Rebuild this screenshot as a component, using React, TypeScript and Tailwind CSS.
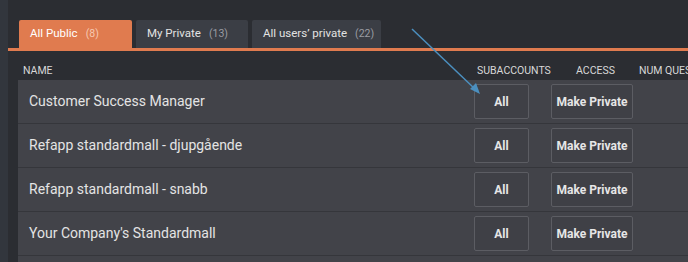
import React from 'react';

const rows = [
  'Customer Success Manager',
  'Refapp standardmall - djupgående',
  'Refapp standardmall - snabb',
  "Your Company's Standardmall",
];

const tabs = [
  { label: 'All Public', count: 8, active: true, w: 'w-[113px]' },
  { label: 'My Private', count: 13, active: false, w: 'w-[112px]' },
  { label: 'All users’ private', count: 22, active: false, w: 'w-[129px]' },
];

function Btn({ children, w }: { children: React.ReactNode; w: string }) {
  return (
    <div
      className={`${w} h-[35px] flex items-center justify-center rounded-[2px] border border-[#5c5d63] bg-[#3f4046] text-[12px] font-bold text-[#e6e6e6]`}
    >
      {children}
    </div>
  );
}

export default function App() {
  return (
    <div
      className="relative w-[688px] h-[262px] overflow-hidden flex bg-[#2b2d32]"
      style={{ fontFamily: 'Roboto, "Liberation Sans", sans-serif' }}
    >
      {/* side strip */}
      <div className="w-[8px] shrink-0 bg-[#32363d]" />

      <div className="flex-1 flex flex-col min-w-0">
        {/* tabs */}
        <div className="flex shrink-0 items-end gap-[4px] pt-[20px] pl-[11px] h-[48px]">
          {tabs.map((t) => (
            <div
              key={t.label}
              className={`${t.w} h-[28px] shrink-0 whitespace-nowrap flex items-center rounded-t-[2px] pl-[11px] text-[11.5px] ${
                t.active ? 'bg-[#e07b4f] text-white' : 'bg-[#3b3e45] text-[#e2e2e2]'
              }`}
            >
              <span>{t.label}</span>
              <span className={`ml-[8px] text-[10.5px] ${t.active ? 'text-[#f6c9b2]' : 'text-[#9a9ca2]'}`}>
                ({t.count})
              </span>
            </div>
          ))}
        </div>
        <div className="h-[3px] shrink-0 bg-[#e07b4f]" />

        {/* table */}
        <div className="pl-[10px] flex flex-col shrink-0">
          <div className="grid grid-cols-[456px_77px_88px_1fr] h-[29px] items-end pb-[1px] text-[10.5px] text-[#d8d8d8] whitespace-nowrap">
            <div className="pl-[5px]">NAME</div>
            <div className="pl-[3px]">SUBACCOUNTS</div>
            <div className="pl-[25px]">ACCESS</div>
            <div className="overflow-hidden">NUM QUESTIONS</div>
          </div>
          {rows.map((r) => (
            <div
              key={r}
              className="grid grid-cols-[456px_77px_88px_1fr] h-[44px] items-center bg-[#424349] border-b border-[#35363b]"
            >
              <div className="pl-[11px] text-[14px] text-[#e4e4e4]">{r}</div>
              <div>
                <Btn w="w-[55px]">All</Btn>
              </div>
              <div>
                <Btn w="w-[82px]">Make Private</Btn>
              </div>
              <div />
            </div>
          ))}
          <div className="h-[44px] bg-[#424349]" />
        </div>
      </div>

      {/* annotation arrow */}
      <svg className="absolute left-0 top-0 pointer-events-none" width="688" height="262">
        <line x1="412" y1="29" x2="476" y2="90" stroke="#4b8fbf" strokeWidth="1.5" />
        <polygon points="480,94 470,89 476,83" fill="#4b8fbf" />
      </svg>
    </div>
  );
}
